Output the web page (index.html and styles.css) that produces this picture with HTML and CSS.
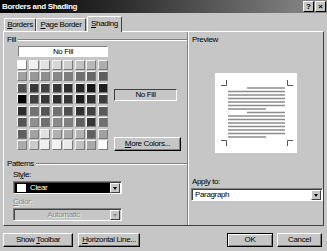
FILE: index.html
```html
<!DOCTYPE html>
<html lang="en">
<head>
    <meta charset="UTF-8" />
    <title>Borders and Shading</title>
    <link rel="stylesheet" href="styles.css">
</head>
<body>
    <div class="dialog">
        <div class="titlebar">
            <span class="title">Borders and Shading</span>
            <div class="title-buttons">
                <span class="tbtn">?</span>
                <span class="tbtn">&#215;</span>
            </div>
        </div>

        <div class="tabs">
            <div class="tab tab-borders"><u>B</u>orders</div>
            <div class="tab tab-page"><u>P</u>age Border</div>
            <div class="tab tab-active"><u>S</u>hading</div>
        </div>

        <div class="panel">
            <div class="col-left">
                <div class="group-head"><span>Fill</span><i class="etch"></i></div>
                <div class="nofill-bar">No Fill</div>
                <div class="fill-row">
                    <div class="swatches" id="swatches"></div>
                    <div class="fill-side">
                        <div class="fill-name">No Fill</div>
                        <div class="btn btn-more"><u>M</u>ore Colors...</div>
                    </div>
                </div>

                <div class="group-head group-patterns"><span>Patterns</span><i class="etch"></i></div>
                <div class="field-label">St<u>y</u>le:</div>
                <div class="select select-style">
                    <div class="select-value selected">
                        <span class="chip"></span>Clear
                    </div>
                    <span class="arrow-btn"><i class="tri"></i></span>
                </div>
                <div class="field-label disabled"><u>C</u>olor:</div>
                <div class="select select-color">
                    <div class="select-value centered">Automatic</div>
                    <span class="arrow-btn"><i class="tri tri-off"></i></span>
                </div>
            </div>

            <div class="col-right">
                <div class="preview-label">Preview</div>
                <div class="page">
                    <svg width="82" height="80" viewBox="0 0 82 80">
                        <g stroke="#555" stroke-width="1" fill="none">
                            <path d="M11.5 7v5.5H6M72.5 7v5.5H78M11.5 73v-5.5H6M72.5 73v-5.5H78" />
                        </g>
                        <g stroke="#8c8c8c" stroke-width="1.3">
                            <line x1="32" y1="15" x2="70" y2="15" />
                            <line x1="13" y1="18.5" x2="70" y2="18.5" />
                            <line x1="13" y1="22" x2="70" y2="22" />
                            <line x1="13" y1="25.5" x2="70" y2="25.5" />
                            <line x1="13" y1="29" x2="70" y2="29" />
                            <line x1="13" y1="32.5" x2="70" y2="32.5" />
                            <line x1="13" y1="36" x2="51" y2="36" />
                            <line x1="32" y1="39.5" x2="70" y2="39.5" />
                            <line x1="13" y1="43" x2="70" y2="43" />
                            <line x1="13" y1="46.5" x2="70" y2="46.5" />
                            <line x1="13" y1="50" x2="70" y2="50" />
                            <line x1="13" y1="53.5" x2="70" y2="53.5" />
                            <line x1="13" y1="57" x2="70" y2="57" />
                            <line x1="13" y1="60.5" x2="70" y2="60.5" />
                            <line x1="13" y1="64" x2="51" y2="64" />
                        </g>
                    </svg>
                </div>
                <div class="field-label apply-label">App<u>l</u>y to:</div>
                <div class="select select-apply">
                    <div class="select-value">Paragraph</div>
                    <span class="arrow-btn"><i class="tri"></i></span>
                </div>
            </div>
        </div>

        <div class="footer">
            <div class="btn btn-toolbar">Show <u>T</u>oolbar</div>
            <div class="btn btn-hline"><u>H</u>orizontal Line...</div>
            <div class="btn btn-ok btn-default">OK</div>
            <div class="btn btn-cancel">Cancel</div>
        </div>
    </div>

    <script>
        // grey levels of the 8x8 shading palette, row by row
        const shades = [
            'fff', 'f0f0f0', 'e2e2e2', 'd6d6d6', 'cecece', 'c2c2c2', 'b8b8b8', 'aeaeae',
            'a0a0a0', '989898', '8e8e8e', '888', '7e7e7e', '707070', '686868', '5e5e5e',
            '505050', '383838', '424242', '383838', '2e2e2e', '262626', '161616', '1e1e1e',
            '000', '404040', '363636', '2e2e2e', '363636', '1e1e1e', '2e2e2e', '3e3e3e',
            '2e2e2e', '727272', '555', '727272', '505050', '303030', '404040', '5a5a5a',
            '555', '909090', '707070', '8a8a8a', '808080', '606060', '363636', '707070',
            '606060', 'a2a2a2', 'e0e0e0', 'b0b0b0', 'a8a8a8', 'b2b2b2', '606060', 'a0a0a0',
            'aaa', 'cacaca', 'eee', 'f2f2f2', 'e8e8e8', 'c0c0c0', 'a8a8a8', 'fff'
        ];
        const grid = document.getElementById('swatches');
        shades.forEach((s) => {
            const cell = document.createElement('span');
            cell.className = 'swatch';
            cell.style.background = '#' + s;
            grid.appendChild(cell);
        });
    </script>
</body>
</html>
```

FILE: styles.css
```css
body {
    margin: 0;
    background: #c6c6c6;
    font-family: 'Liberation Sans', Arial, sans-serif;
    font-size: 8px;
    letter-spacing: -0.35px;
    color: #000;
    white-space: nowrap;
}
u {
    text-decoration: underline;
    text-underline-offset: 1px;
}
.dialog {
    width: 327px;
    height: 251px;
    overflow: hidden;
}
.titlebar {
    height: 13px;
    background: linear-gradient(90deg, #000 0%, #2a2a2a 35%, #8c8c8c 100%);
    display: flex;
    align-items: center;
    justify-content: space-between;
    padding: 0 1px 0 2px;
}
.title {
    color: #fff;
    font-weight: 700;
    font-size: 8px;
    letter-spacing: -0.3px;
}
.title-buttons {
    display: flex;
    gap: 1px;
}
.tbtn {
    width: 9px;
    height: 9px;
    background: #c6c6c6;
    border: 1px solid;
    border-color: #fff #000 #000 #fff;
    font-weight: 700;
    font-size: 8px;
    line-height: 9px;
    text-align: center;
    letter-spacing: 0;
}
.tabs {
    margin-top: 3px;
    height: 15px;
    padding-left: 4px;
    display: flex;
    align-items: flex-end;
}
.tab {
    height: 12px;
    line-height: 12px;
    border-top: 1px solid #fff;
    border-left: 1px solid #fff;
    border-right: 1px solid #404040;
    border-radius: 2px 2px 0 0;
    text-align: center;
    box-sizing: content-box;
}
.tab-borders {
    width: 30px;
}
.tab-page {
    width: 48px;
}
.tab-active {
    width: 33px;
    height: 14px;
    line-height: 14px;
    margin-left: 1px;
    margin-bottom: -1px;
    padding-bottom: 1px;
    background: #c6c6c6;
    position: relative;
    z-index: 1;
}
.panel {
    margin: 0 3px 0 3px;
    height: 193px;
    border-top: 1px solid #fff;
    border-left: 1px solid #fff;
    border-right: 1px solid #404040;
    border-bottom: 1px solid #404040;
    display: flex;
}
.col-left {
    width: 184px;
}
.col-right {
    flex: 1;
    border-left: 1px solid #808080;
    box-shadow: inset 1px 0 #fff;
    padding-left: 1px;
}
.group-head {
    margin-top: 3px;
    height: 9px;
    display: flex;
    align-items: center;
    padding-left: 3px;
}
.group-head span {
    padding-right: 2px;
}
.etch {
    flex: 1;
    height: 0;
    border-top: 1px solid #808080;
    border-bottom: 1px solid #fff;
    margin-top: 1px;
}
.group-patterns {
    margin-top: 8px;
}
.nofill-bar {
    margin: 2px 0 0 14px;
    width: 88px;
    height: 9px;
    line-height: 9px;
    background: #fff;
    border: 1px solid;
    border-color: #808080 #fff #fff #808080;
    text-align: center;
}
.fill-row {
    margin-top: 3px;
    display: flex;
}
.swatches {
    margin-left: 13px;
    width: 91px;
    height: 90px;
    display: grid;
    grid-template-columns: repeat(8, 1fr);
    grid-template-rows: repeat(8, 1fr);
    gap: 1.5px;
}
.swatch {
    border: 1px solid;
    border-color: #f4f4f4 #7a7a7a #7a7a7a #f4f4f4;
}
.fill-side {
    margin-left: 6px;
    display: flex;
    flex-direction: column;
}
.fill-name {
    margin-top: 29px;
    width: 61px;
    height: 10px;
    line-height: 10px;
    border: 1px solid;
    border-color: #404040 #fff #fff #404040;
    text-align: center;
}
.btn {
    height: 12px;
    line-height: 12px;
    border: 1px solid;
    border-color: #fff #000 #000 #fff;
    box-shadow: inset -1px -1px #808080;
    text-align: center;
    box-sizing: content-box;
}
.btn-more {
    margin-top: 36px;
    width: 65px;
}
.field-label {
    margin-top: 2px;
    height: 10px;
    line-height: 10px;
    padding-left: 9px;
}
.field-label.disabled {
    margin-top: 3px;
    color: #8a8a8a;
    text-shadow: 1px 1px #eee;
}
.select {
    margin: 1px 0 0 9px;
    width: 105px;
    height: 10px;
    border: 1px solid;
    border-color: #808080 #fff #fff #808080;
    box-shadow: inset 1px 1px #404040;
    display: flex;
    padding: 1px 1px 0 1px;
    box-sizing: content-box;
    background: #fff;
}
.select-value {
    flex: 1;
    line-height: 10px;
    padding-left: 2px;
    display: flex;
    align-items: center;
}
.selected {
    background: #000;
    color: #fff;
}
.chip {
    width: 9px;
    height: 8px;
    background: #fff;
    margin-right: 4px;
}
.select-color {
    background: #c6c6c6;
}
.centered {
    justify-content: center;
    color: #8a8a8a;
    text-shadow: 1px 1px #eee;
}
.arrow-btn {
    width: 8px;
    height: 8px;
    background: #c6c6c6;
    border: 1px solid;
    border-color: #fff #404040 #404040 #fff;
    display: flex;
    align-items: center;
    justify-content: center;
}
.tri {
    width: 0;
    height: 0;
    border-left: 2.5px solid transparent;
    border-right: 2.5px solid transparent;
    border-top: 3px solid #000;
}
.tri-off {
    border-top-color: #8a8a8a;
}
.preview-label {
    margin-top: 3px;
    height: 9px;
    line-height: 9px;
    padding-left: 3px;
}
.page {
    margin: 29px 0 0 26px;
    width: 82px;
    height: 80px;
    background: #fff;
}
.page svg {
    display: block;
}
.apply-label {
    margin-top: 24px;
    padding-left: 3px;
}
.select-apply {
    margin: 1px 0 0 2px;
    width: 128px;
}
.footer {
    display: flex;
    padding: 7px 5px 0 3px;
}
.btn-toolbar {
    width: 68px;
}
.btn-hline {
    margin-left: 5px;
    width: 60px;
}
.btn-ok {
    margin-left: auto;
    width: 44px;
}
.btn-default {
    border-color: #000;
    box-shadow: inset 1px 1px #fff, inset -1px -1px #808080;
}
.btn-cancel {
    margin-left: 4px;
    width: 43px;
}
```
